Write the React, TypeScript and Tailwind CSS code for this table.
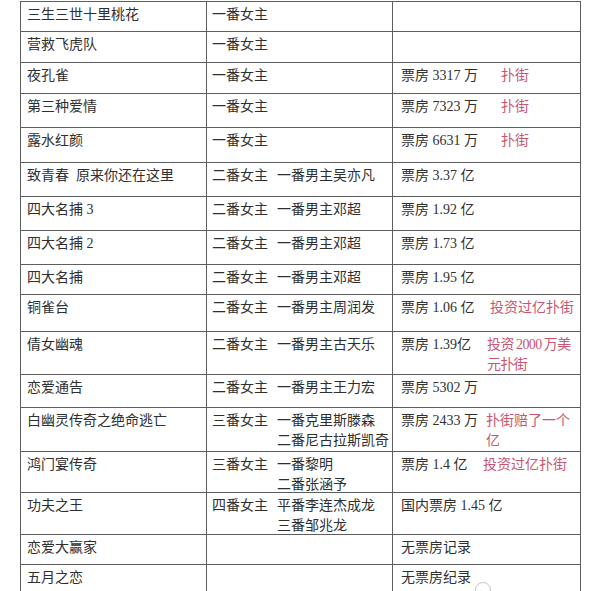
import React from "react";

type Row = {
  h: number;
  title: string;
  role?: string;
  partners?: string[];
  box?: string;
  boxW?: number;
  red?: string[];
  tight?: boolean;
};

const rows: Row[] = [
  { h: 30, title: "三生三世十里桃花", role: "一番女主" },
  { h: 31, title: "营救飞虎队", role: "一番女主" },
  { h: 31, title: "夜孔雀", role: "一番女主", box: "票房 3317 万", boxW: 100, red: ["扑街"] },
  { h: 34, title: "第三种爱情", role: "一番女主", box: "票房 7323 万", boxW: 100, red: ["扑街"] },
  { h: 35, title: "露水红颜", role: "一番女主", box: "票房 6631 万", boxW: 100, red: ["扑街"] },
  { h: 34, title: "致青春  原来你还在这里", role: "二番女主", partners: ["一番男主吴亦凡"], box: "票房 3.37 亿" },
  { h: 34, title: "四大名捕 3", role: "二番女主", partners: ["一番男主邓超"], box: "票房 1.92 亿" },
  { h: 34, title: "四大名捕 2", role: "二番女主", partners: ["一番男主邓超"], box: "票房 1.73 亿" },
  { h: 30, title: "四大名捕", role: "二番女主", partners: ["一番男主邓超"], box: "票房 1.95 亿" },
  { h: 37, title: "铜雀台", role: "二番女主", partners: ["一番男主周润发"], box: "票房 1.06 亿", boxW: 89, red: ["投资过亿扑街"] },
  { h: 43, title: "倩女幽魂", role: "二番女主", partners: ["一番男主古天乐"], box: "票房 1.39亿", boxW: 86, red: ["投资\u20092000\u2009万美", "元扑街"], tight: true },
  { h: 33, title: "恋爱通告", role: "二番女主", partners: ["一番男主王力宏"], box: "票房 5302 万" },
  { h: 44, title: "白幽灵传奇之绝命逃亡", role: "三番女主", partners: ["一番克里斯滕森", "二番尼古拉斯凯奇"], box: "票房 2433 万", boxW: 85, red: ["扑街赔了一个", "亿"] },
  { h: 41, title: "鸿门宴传奇", role: "三番女主", partners: ["一番黎明", "二番张涵予"], box: "票房 1.4 亿", boxW: 82, red: ["投资过亿扑街"] },
  { h: 42, title: "功夫之王", role: "四番女主", partners: ["平番李连杰成龙", "三番邹兆龙"], box: "国内票房 1.45 亿" },
  { h: 30, title: "恋爱大赢家", box: "无票房记录" },
  { h: 40, title: "五月之恋", box: "无票房纪录" },
];

export default function App() {
  return (
    <div
      className="w-[600px] h-[591px] overflow-hidden bg-white pl-[20px] pt-[1px] text-[14px] leading-[20px] text-[#2f2f2f]"
      style={{ fontFamily: '"Liberation Serif", "Noto Sans CJK SC", serif' }}
    >
      <div className="w-[561px] border-t-[1.5px] border-l-[1.5px] border-r-[1.5px] border-[#5e5e5e]">
        {rows.map((r, i) => (
          <div
            key={i}
            className="grid grid-cols-[186px_186px_186px] border-b-[1.5px] border-[#5e5e5e]"
            style={{ height: r.h }}
          >
            <div className="border-r-[1.5px] border-[#5e5e5e] pl-[6px] pt-[3px] whitespace-pre">
              {r.title}
            </div>
            <div className="border-r-[1.5px] border-[#5e5e5e] pl-[5px] pt-[3px] flex gap-[9px]">
              {r.role && <span className="shrink-0">{r.role}</span>}
              {r.partners && (
                <div className="flex flex-col">
                  {r.partners.map((p, j) => (
                    <span key={j} className="whitespace-nowrap">{p}</span>
                  ))}
                </div>
              )}
            </div>
            <div className="relative pl-[8px] pt-[3px] flex">
              {r.box && (
                <span
                  className="shrink-0 whitespace-nowrap"
                  style={r.boxW ? { width: r.boxW } : undefined}
                >
                  {r.box}
                </span>
              )}
              {r.red && (
                <div
                  className={
                    r.tight
                      ? "flex flex-col text-[#c9566f] whitespace-nowrap tracking-[-0.6px]"
                      : "flex flex-col text-[#c9566f] whitespace-nowrap"
                  }
                >
                  {r.red.map((t, j) => (
                    <span key={j}>{t}</span>
                  ))}
                </div>
              )}
              {i === rows.length - 1 && (
                <div className="absolute left-[82px] top-[17px] w-[16px] h-[16px] rounded-full border border-[#c8c8c8]" />
              )}
            </div>
          </div>
        ))}
      </div>
    </div>
  );
}
